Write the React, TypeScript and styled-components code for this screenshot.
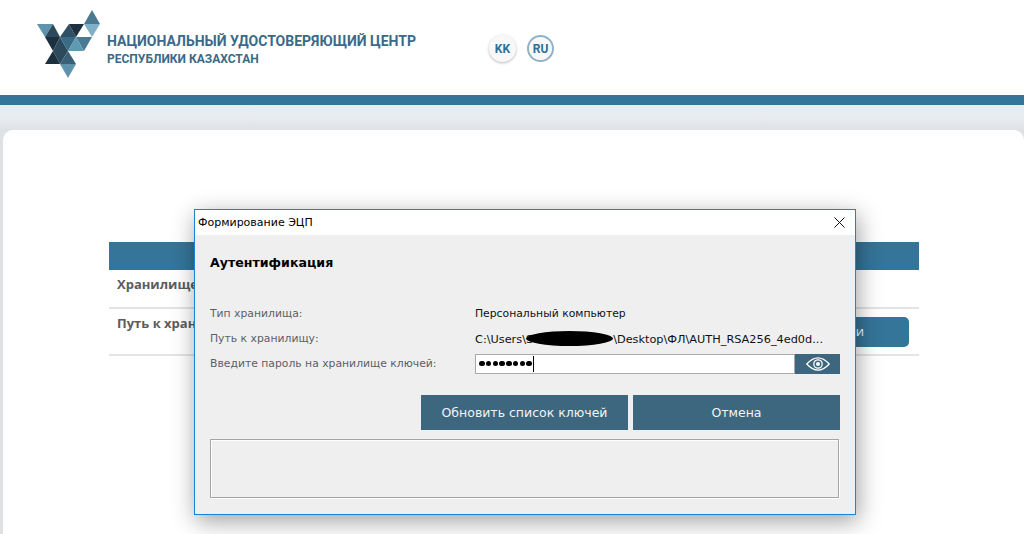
import styled, { createGlobalStyle } from 'styled-components'

const GlobalStyle = createGlobalStyle`
  html, body {
    margin: 0;
    padding: 0;
    background: #fff;
    overflow: hidden;
  }
  #root {
    height: 534px;
  }
`

const Page = styled.div`
  position: relative;
  width: 1024px;
  height: 534px;
  overflow: hidden;
  display: flex;
  flex-direction: column;
  background: linear-gradient(#e8edf1 105px, #e8ecf0 118px, #dfe2e5 130px);
`

const Header = styled.header`
  height: 95px;
  flex: none;
  box-sizing: border-box;
  padding: 10px 0 0 37px;
  background: #fff;
  display: flex;
  align-items: flex-start;
`

const Brand = styled.div`
  display: flex;
  flex-direction: column;
  margin: 21px 0 0 6px;
  width: 382px;
  font-family: Roboto, sans-serif;
  font-weight: 700;
  color: #3a6a88;
`

const BrandTitle = styled.div`
  font-size: 14px;
  line-height: 20px;
  white-space: nowrap;
`

const BrandSub = styled.div`
  font-size: 12px;
  line-height: 16px;
  white-space: nowrap;
`

const Langs = styled.div`
  display: flex;
  gap: 11px;
  margin-top: 25px;
`

const Lang = styled.div<{ $active?: boolean }>`
  width: 27px;
  height: 27px;
  box-sizing: border-box;
  border-radius: 50%;
  display: flex;
  align-items: center;
  justify-content: center;
  font: 700 12px Roboto, sans-serif;
  color: #2f7096;
  background: #f8f8f8;
  border: ${p => (p.$active ? '2px solid #8fb3c8' : '0')};
  box-shadow: ${p => (p.$active ? 'none' : '0 1px 3px rgba(0,0,0,.28)')};
`

const Band = styled.div`
  height: 10px;
  flex: none;
  background: #357599;
`

const Card = styled.main`
  flex: 1;
  margin: 25px 0 0 3px;
  background: #fff;
  border-radius: 10px 10px 0 0;
  padding: 112px 105px 0 106px;
`

const Table = styled.div`
  display: flex;
  flex-direction: column;
  font: 700 13px "Open Sans", sans-serif;
  color: #5c5c5c;
`

const TableHead = styled.div`
  height: 28px;
  background: #357599;
`

const TableRow = styled.div<{ $h: number }>`
  height: ${p => p.$h}px;
  box-sizing: border-box;
  border-bottom: 2px solid #e4e4e4;
  padding: 5px 10px 0 8px;
  display: flex;
  justify-content: space-between;
  align-items: flex-start;
`

const SelectButton = styled.div`
  width: 300px;
  height: 30px;
  margin-top: 3px;
  border-radius: 5px;
  background: #357599;
  color: #fff;
  font-weight: 400;
  text-align: right;
  line-height: 28px;
  box-sizing: border-box;
  padding-right: 45px;
`

const Dialog = styled.section`
  position: absolute;
  left: 194px;
  top: 209px;
  width: 662px;
  height: 306px;
  box-sizing: border-box;
  border: 1px solid #1883d7;
  background: #efefef;
  box-shadow: 2px 6px 22px rgba(0, 0, 0, 0.38);
  display: flex;
  flex-direction: column;
  font: 11px "DejaVu Sans", sans-serif;
  color: #000;
`

const TitleBar = styled.div`
  height: 25px;
  flex: none;
  background: #fff;
  padding: 0 10px 0 3px;
  display: flex;
  align-items: center;
  justify-content: space-between;
`

const DialogBody = styled.div`
  flex: 1;
  padding: 0 15px 16px;
  display: flex;
  flex-direction: column;
`

const Heading = styled.h2`
  margin: 19px 0 0;
  font-size: 12.6px;
  line-height: 18px;
  font-weight: 700;
`

const Rows = styled.div`
  margin-top: 28px;
  display: flex;
  flex-direction: column;
`

const Row = styled.div<{ $h: number }>`
  display: grid;
  grid-template-columns: 265px 1fr;
  height: ${p => p.$h}px;
  align-items: center;
  font-size: 10.8px;
`

const Label = styled.div`
  color: #5d5d6a;
`

const Value = styled.div`
  white-space: nowrap;
  color: #111;
`

const PathValue = styled(Value)`
  font-size: 11.3px;
`

const Redacted = styled.span`
  display: inline-block;
  width: 87px;
  height: 15px;
  margin: 0 0 0 -7px;
  vertical-align: -3px;
  background: #000;
  border-radius: 50%;
`

const PasswordGroup = styled.div`
  display: flex;
  height: 20px;
`

const PasswordField = styled.div`
  width: 320px;
  box-sizing: border-box;
  background: #fff;
  border: 1px solid #a9a9a9;
  display: flex;
  align-items: center;
  padding-left: 3px;
`

const Dot = styled.i`
  width: 5.5px;
  height: 5.5px;
  margin-right: 1.25px;
  border-radius: 50%;
  background: #000;
`

const Caret = styled.i`
  width: 1px;
  height: 16px;
  background: #000;
`

const EyeButton = styled.div`
  flex: 1;
  background: #3d677f;
  display: flex;
  align-items: center;
  justify-content: center;
`

const Actions = styled.div`
  margin-top: 19px;
  display: flex;
  justify-content: flex-end;
  gap: 5px;
`

const ActionButton = styled.div`
  width: 207px;
  height: 35px;
  background: #3d677f;
  color: #f4f4f4;
  font-size: 12.5px;
  display: flex;
  align-items: center;
  justify-content: center;
`

const MessageBox = styled.div`
  margin-top: 9px;
  height: 59px;
  box-sizing: border-box;
  margin-right: 1px;
  border: 1px solid #a5a5a5;
  box-shadow: inset 1px 1px 0 #fff, 1px 1px 0 #fff;
`

const LOGO: [string, string][] = [
  ['37,24 53,24 45,37', '#5f93ad'],
  ['53,24 45,37 60,37', '#2c4a5c'],
  ['69,24 60,37 76,37', '#2f5064'],
  ['69,24 84,24 76,37', '#1c3040'],
  ['92,10 84,24 100,24', '#4a7a92'],
  ['84,24 100,24 92,37', '#7fb0c8'],
  ['45,37 60,37 53,51', '#1c3040'],
  ['60,37 53,51 68,51', '#2c4a5c'],
  ['60,37 76,37 68,51', '#3a6a85'],
  ['76,37 68,51 84,51', '#5f9ab5'],
  ['76,37 92,37 84,51', '#4a7a92'],
  ['53,51 68,51 60,64', '#2c4a5c'],
  ['53,51 45,64 60,64', '#1c3040'],
  ['68,51 60,64 76,64', '#3a6076'],
  ['60,64 76,64 68,78', '#5f93ad'],
]

function Logo() {
  return (
    <svg width="64" height="68" viewBox="37 10 64 68">
      {LOGO.map(([points, fill]) => (
        <polygon key={points} points={points} fill={fill} />
      ))}
    </svg>
  )
}

function CloseIcon() {
  return (
    <svg width="11" height="11" viewBox="0 0 11 11">
      <path d="M.5.5l10 10M10.5.5l-10 10" stroke="#111" fill="none" />
    </svg>
  )
}

function EyeIcon() {
  return (
    <svg width="24" height="14" viewBox="0 0 24 14" fill="none" stroke="#fff">
      <path d="M.8 7C5 2.4 8.5.8 12 .8S19 2.4 23.2 7C19 11.6 15.5 13.2 12 13.2S5 11.6.8 7z" strokeWidth="1.3" />
      <circle cx="12" cy="7" r="4.2" strokeWidth="1.3" />
      <circle cx="12" cy="7" r="2" fill="#fff" stroke="none" />
    </svg>
  )
}

export default function App() {
  return (
    <Page>
      <GlobalStyle />
      <Header>
        <Logo />
        <Brand>
          <BrandTitle>НАЦИОНАЛЬНЫЙ УДОСТОВЕРЯЮЩИЙ ЦЕНТР</BrandTitle>
          <BrandSub>РЕСПУБЛИКИ КАЗАХСТАН</BrandSub>
        </Brand>
        <Langs>
          <Lang>KK</Lang>
          <Lang $active>RU</Lang>
        </Langs>
      </Header>
      <Band />
      <Card>
        <Table>
          <TableHead />
          <TableRow $h={39}>Хранилище ключей</TableRow>
          <TableRow $h={47}>
            Путь к хранилищу ключей
            <SelectButton>Выбрать ключи</SelectButton>
          </TableRow>
        </Table>
      </Card>
      <Dialog>
        <TitleBar>
          Формирование ЭЦП
          <CloseIcon />
        </TitleBar>
        <DialogBody>
          <Heading>Аутентификация</Heading>
          <Rows>
            <Row $h={26}>
              <Label>Тип хранилища:</Label>
              <Value>Персональный компьютер</Value>
            </Row>
            <Row $h={25}>
              <Label>Путь к хранилищу:</Label>
              <PathValue>
                C:\Users\S<Redacted />\Desktop\ФЛ\AUTH_RSA256_4ed0d...
              </PathValue>
            </Row>
            <Row $h={25}>
              <Label>Введите пароль на хранилище ключей:</Label>
              <PasswordGroup>
                <PasswordField>
                  {Array.from({ length: 8 }, (_, i) => (
                    <Dot key={i} />
                  ))}
                  <Caret />
                </PasswordField>
                <EyeButton>
                  <EyeIcon />
                </EyeButton>
              </PasswordGroup>
            </Row>
          </Rows>
          <Actions>
            <ActionButton>Обновить список ключей</ActionButton>
            <ActionButton>Отмена</ActionButton>
          </Actions>
          <MessageBox />
        </DialogBody>
      </Dialog>
    </Page>
  )
}
